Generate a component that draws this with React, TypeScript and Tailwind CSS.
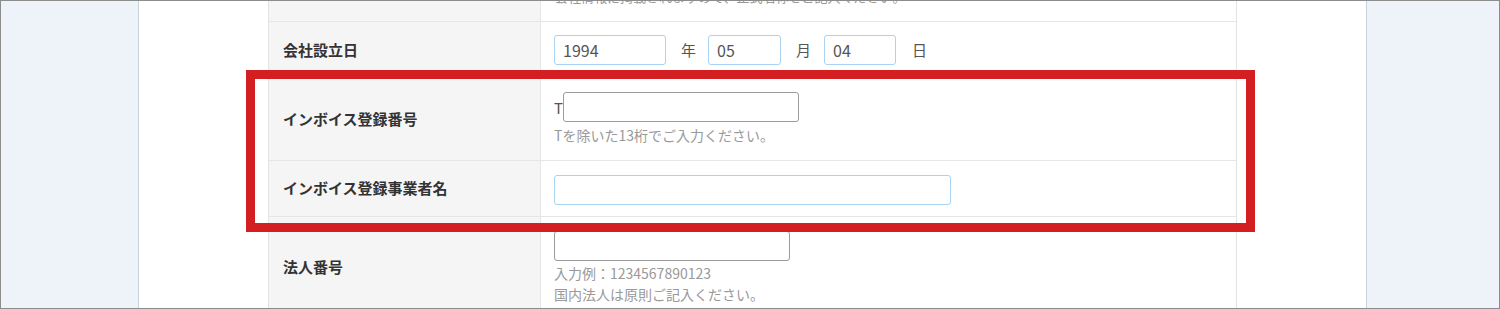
import React from 'react';

const jp = "font-['Noto_Sans_CJK_JP','Noto_Sans',sans-serif]";

function Row({
    label,
    children,
    pad = 'pt-[13px] pb-[13px]',
}: {
    label: string;
    children: React.ReactNode;
    pad?: string;
}) {
    return (
        <div className="grid grid-cols-[272px_1fr] border-b border-[#e6e6e6]">
            <div className="flex items-center border-r border-[#e6e6e6] bg-[#f5f5f5] pl-[14px] text-[15px] font-bold text-[#333]">
                {label}
            </div>
            <div className={`pl-[13px] ${pad}`}>{children}</div>
        </div>
    );
}

function TextBox({ value = '', width, tone }: { value?: string; width: string; tone: 'blue' | 'gray' }) {
    return (
        <div
            className={`flex h-[30px] items-center rounded-[3px] border bg-white pl-[8px] text-[16px] text-[#555] ${width} ${
                tone === 'blue' ? 'border-[#a9d3f3]' : 'border-[#9c9c9c]'
            }`}
        >
            {value}
        </div>
    );
}

export default function App() {
    return (
        <div className={`relative flex h-[309px] w-[1500px] overflow-hidden border border-[#8c8c8c] bg-white ${jp}`}>
            {/* left side */}
            <div className="w-[138px] shrink-0 border-r border-[#c9d1db] bg-[#eef3fa]" />

            {/* main */}
            <div className="flex-1">
                <div className="ml-[129px] w-[969px] border-x border-[#e3e3e3]">
                    {/* clipped row above */}
                    <div className="grid h-[21px] grid-cols-[272px_1fr] overflow-hidden border-b border-[#e6e6e6]">
                        <div className="border-r border-[#e6e6e6] bg-[#f5f5f5]" />
                        <p className="-mt-[15px] pl-[14px] text-[13px] leading-[21px] text-[#999]">
                            会社情報に掲載されますので、正式名称をご記入ください。
                        </p>
                    </div>

                    <Row label="会社設立日">
                        <div className="flex items-center text-[15px] text-[#555]">
                            <TextBox value="1994" width="w-[112px]" tone="blue" />
                            <span className="ml-[15px] mr-[12px]">年</span>
                            <TextBox value="05" width="w-[73px]" tone="blue" />
                            <span className="ml-[15px] mr-[13px]">月</span>
                            <TextBox value="04" width="w-[72px]" tone="blue" />
                            <span className="ml-[16px]">日</span>
                        </div>
                    </Row>

                    <Row label="インボイス登録番号" pad="pt-[13px] pb-[14px]">
                        <div className="flex items-center">
                            <span className="text-[15px] leading-none text-[#555]">T</span>
                            <TextBox width="w-[236px]" tone="gray" />
                        </div>
                        <p className="mt-[3px] text-[14px] leading-[21px] text-[#999]">
                            Tを除いた13桁でご入力ください。
                        </p>
                    </Row>

                    <Row label="インボイス登録事業者名" pad="pt-[14px] pb-[11px]">
                        <TextBox width="w-[397px]" tone="blue" />
                    </Row>

                    <Row label="法人番号" pad="pt-[14px] pb-[13px]">
                        <TextBox width="w-[236px]" tone="gray" />
                        <p className="mt-[2px] text-[14px] leading-[21px] text-[#999]">
                            入力例：1234567890123
                        </p>
                        <p className="text-[14px] leading-[21px] text-[#999]">
                            国内法人は原則ご記入ください。
                        </p>
                    </Row>
                </div>
            </div>

            {/* right side */}
            <div className="w-[133px] shrink-0 border-l border-[#c9d1db] bg-[#eef3fa]" />

            {/* highlight frame */}
            <div className="pointer-events-none absolute left-[245px] top-[69px] h-[162px] w-[1009px] border-[9px] border-[#d41f22]" />
        </div>
    );
}
